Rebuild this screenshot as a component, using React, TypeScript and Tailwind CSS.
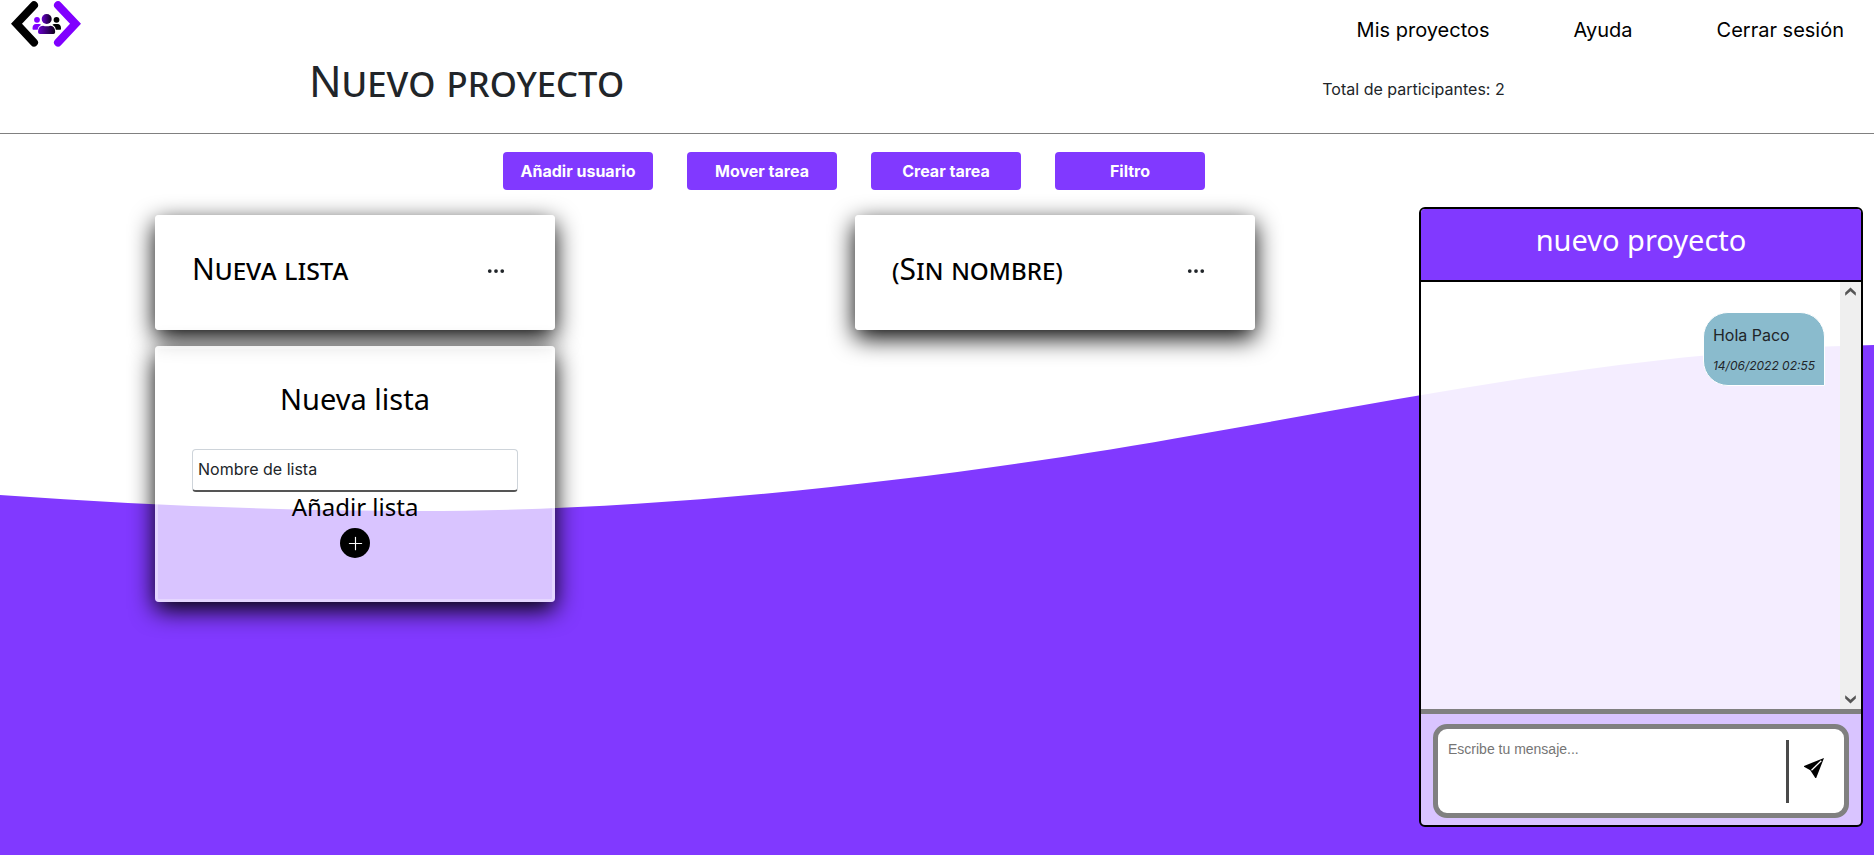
import { FiPlus } from "react-icons/fi";
import { BsThreeDots } from "react-icons/bs";

const heading = "font-['Noto_Sans','Open_Sans',sans-serif]";
const cardStyle =
  "w-[400px] rounded border-[3px] border-white/30 bg-white/70 bg-clip-border px-[34px] text-black shadow-[0_8px_24px_#000]";

function Logo() {
  return (
    <svg width="92" height="48" viewBox="0 0 92 48" aria-hidden="true">
      <defs>
        <linearGradient id="people" x1="0" x2="1" y1="0" y2="0">
          <stop offset="0" stopColor="#6a00d0" />
          <stop offset="1" stopColor="#0c0018" />
        </linearGradient>
      </defs>
      <path d="M34 5.200L16.500 23.700 34 42.500" fill="none" stroke="#000" strokeWidth="8" strokeLinecap="round" />
      <path d="M58 5.200L75.500 23.700 58 42.500" fill="none" stroke="#8000ff" strokeWidth="8" strokeLinecap="round" />
      <circle cx="37" cy="19.800" r="2.900" fill="#8000ff" />
      <path d="M32.500 28.500q0-4.500 3.500-4.500h3q1.500 0 2 .8-3 1.700-3.400 5H33q-.5-.5-.5-1.300Z" fill="#8000ff" />
      <circle cx="56.500" cy="19.800" r="2.900" fill="#000" />
      <path d="M61 28.500q0-4.500-3.500-4.500h-3q-1.500 0-2 .8 3 1.700 3.400 5h4.600q.5-.5.5-1.300Z" fill="#000" />
      <circle cx="46.700" cy="19" r="5" fill="url(#people)" />
      <path d="M38 32q0-6 5-6.300 3.700 1 7.400 0 4.800.3 4.800 6.300 0 2-1.800 2H40q-2 0-2-2Z" fill="url(#people)" />
    </svg>
  );
}

function Wave() {
  return (
    <svg
      className="absolute inset-0 -z-10 h-full w-full"
      viewBox="0 0 1874 855"
      preserveAspectRatio="none"
      aria-hidden="true"
    >
      <path
        d="M0 495C140 505 280 511 420 511C700 511 1000 470 1195 435C1420 396 1640 350 1874 345V855H0Z"
        fill="#8139ff"
      />
    </svg>
  );
}

function ListCard({ name }: { name: string }) {
  return (
    <section className={`${cardStyle} flex h-[115px] items-center justify-between pb-1`}>
      <h2 className={`${heading} pb-1 text-[30px] leading-8 [font-variant:small-caps]`}>{name}</h2>
      <button type="button" aria-label="Opciones" className="mr-3 text-[#212529]">
        <BsThreeDots size={20} />
      </button>
    </section>
  );
}

function NewListCard() {
  return (
    <form className={`${cardStyle} flex h-64 flex-col items-center pt-8`}>
      <h2 className={`${heading} text-[29px] leading-9`}>Nueva lista</h2>
      <input
        type="text"
        aria-label="Nombre de lista"
        placeholder="Nombre de lista"
        className="mt-8 h-[43px] w-full shrink-0 rounded border border-b-2 border-[#ced4da] border-b-[#555] bg-white px-[5px] pb-[2px] text-base text-[#212529] placeholder:text-[#212529]"
      />
      <button type="button" className={`${heading} flex flex-col items-center text-2xl leading-[30px]`}>
        Añadir lista
        <span className="mt-[6px] flex size-[30px] items-center justify-center rounded-full bg-black text-white">
          <FiPlus size={21} strokeWidth={1.3} />
        </span>
      </button>
    </form>
  );
}

function Chat() {
  return (
    <aside className="mt-[7px] mr-[11px] flex h-[620px] w-[444px] shrink-0 flex-col overflow-hidden rounded-md border-2 border-black bg-white/70">
      <header className="flex h-[73px] shrink-0 justify-center border-b-2 border-black bg-[#8139ff] pt-4">
        <h2 className={`${heading} text-[29px] leading-[30px] text-white`}>nuevo proyecto</h2>
      </header>
      <div className="flex grow bg-white/70">
        <div className="flex grow flex-col items-end pt-[30px] pr-[15px]">
          <article className="h-[74px] rounded-[25px] rounded-br-none border border-white bg-[#8abbcd] px-[9px] pt-[10px] text-[#212529]">
            <p className="text-base leading-6">Hola Paco</p>
            <time className="mt-[9px] block text-xs leading-5 italic">14/06/2022 02:55</time>
          </article>
        </div>
        <div className="flex w-[21px] flex-col items-center justify-between bg-[#efefef] py-[5px]">
          <svg width="11" height="9" viewBox="0 0 11 9" aria-hidden="true">
            <path d="M5.500 .500L10.800 5.600V8.800L5.500 4.200.2 8.800V5.600Z" fill="#555" />
          </svg>
          <svg width="11" height="9" viewBox="0 0 11 9" aria-hidden="true">
            <path d="M5.500 8.500L10.800 3.400V.2L5.500 4.800.2.2V3.400Z" fill="#555" />
          </svg>
        </div>
      </div>
      <form className="shrink-0 border-t-[5px] border-[#808080] px-3 pt-[10px] pb-[7px]">
        <div className="flex h-[94px] items-center rounded-[14px] border-[5px] border-[#808080] bg-white py-[10px] pl-[10px]">
          <textarea
            aria-label="Mensaje"
            placeholder="Escribe tu mensaje..."
            className="h-full grow resize-none bg-transparent font-['Liberation_Sans',sans-serif] text-sm leading-5 outline-none placeholder:text-[#757575]"
          />
          <button
            type="button"
            aria-label="Enviar"
            className="flex h-[63px] w-[58px] items-center border-l-[3px] border-[#4a4a4a] pb-[6px] pl-[15px]"
          >
            <svg width="20" height="20" viewBox="0 0 20 20" aria-hidden="true">
              <path d="M20 0L0 7.900V8.800L6.300 12.200 11.300 20H12.200Z" fill="#000" />
              <path d="M7.500 12.300L17.300 2.700" stroke="#fff" strokeWidth="1.300" />
            </svg>
          </button>
        </div>
      </form>
    </aside>
  );
}

const actions = ["Añadir usuario", "Mover tarea", "Crear tarea", "Filtro"];

export default function App() {
  return (
    <div className="relative isolate min-h-screen bg-white font-['Inter',sans-serif] text-[#212529]">
      <Wave />
      <header className="border-b border-[#808080]">
        <div className="flex h-[60px] justify-between">
          <a href="#" aria-label="Inicio" className="block h-12">
            <Logo />
          </a>
          <nav className="flex items-center gap-[84px] pr-[30px] text-xl text-black">
            <a href="#">Mis proyectos</a>
            <a href="#">Ayuda</a>
            <a href="#">Cerrar sesión</a>
          </nav>
        </div>
        <div className="grid h-[73px] grid-cols-2 text-center">
          <h1 className={`${heading} pr-1 text-[43px] leading-[42px] [font-variant:small-caps]`}>Nuevo proyecto</h1>
          <p className="pt-[17px] pl-4 text-base leading-6">Total de participantes: 2</p>
        </div>
      </header>
      <div className="flex justify-center gap-[34px] pt-[18px] pr-[166px]">
        {actions.map((label) => (
          <button
            key={label}
            type="button"
            className="h-[38px] w-[150px] rounded bg-[#8139ff] text-base font-bold text-white"
          >
            {label}
          </button>
        ))}
      </div>
      <main className="flex pt-[10px]">
        <div className="grid grow grid-cols-2 items-start pt-[15px] pr-[14px] pl-[5px]">
          <div className="flex flex-col items-center gap-4">
            <ListCard name="Nueva lista" />
            <NewListCard />
          </div>
          <div className="flex justify-center">
            <ListCard name="(Sin nombre)" />
          </div>
        </div>
        <Chat />
      </main>
    </div>
  );
}
